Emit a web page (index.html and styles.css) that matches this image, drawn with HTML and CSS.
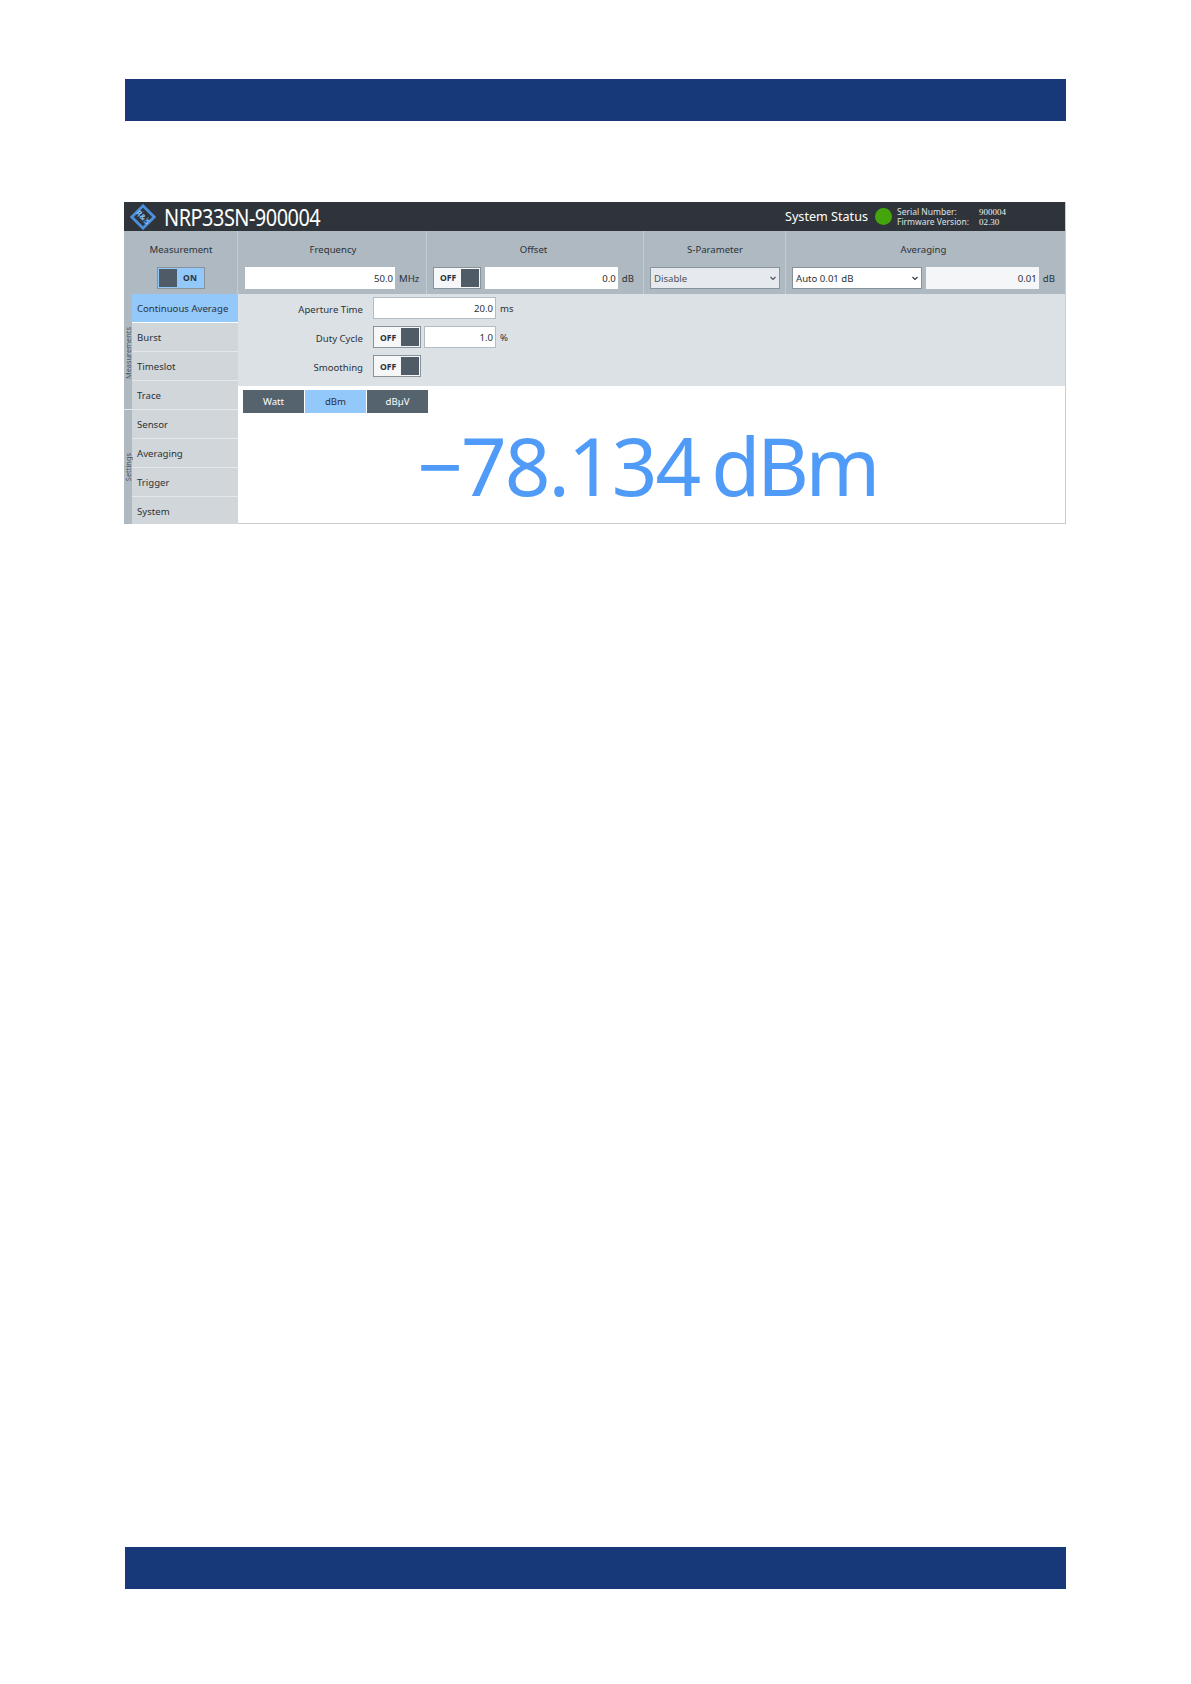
FILE: index.html
```html
<!DOCTYPE html>
<html lang="en">
<head>
  <meta charset="UTF-8" />
  <title>NRP33SN-900004</title>
  <link rel="stylesheet" href="styles.css">
</head>
<body>
  <div class="band band-top"></div>

  <div class="app">
    <!-- Title bar -->
    <header class="title-bar">
      <svg class="logo" viewBox="0 0 28 28" width="26" height="26">
        <rect x="5.5" y="5.5" width="17" height="17" transform="rotate(45 14 14)" fill="none" stroke="#4a90dc" stroke-width="3"/>
        <path d="M8 14L14 8M14 20L20 14" stroke="#4a90dc" stroke-width="1"/>
        <g fill="#8fbdec" font-family="'Noto Sans', sans-serif" font-size="8" font-weight="700" text-anchor="middle">
          <text x="9.5" y="12.5" transform="rotate(45 9.5 10)">R</text>
          <text x="14" y="17" transform="rotate(45 14 14)">&amp;</text>
          <text x="18.5" y="22" transform="rotate(45 18.5 19)">S</text>
        </g>
      </svg>
      <span class="device-name">NRP33SN-900004</span>
      <span class="system-status">System Status</span>
      <span class="status-led"></span>
      <dl class="device-info">
        <dt>Serial Number:</dt><dd>900004</dd>
        <dt>Firmware Version:</dt><dd>02.30</dd>
      </dl>
    </header>

    <!-- Top controls -->
    <section class="controls">
      <div class="control">
        <div class="control-title">Measurement</div>
        <div class="control-row center">
          <div class="toggle toggle-on"><span class="knob"></span><span class="state">ON</span></div>
        </div>
      </div>
      <div class="control">
        <div class="control-title">Frequency</div>
        <div class="control-row">
          <div class="field freq-field">50.0</div>
          <span class="unit">MHz</span>
        </div>
      </div>
      <div class="control">
        <div class="control-title">Offset</div>
        <div class="control-row">
          <div class="toggle"><span class="state">OFF</span><span class="knob"></span></div>
          <div class="field grow">0.0</div>
          <span class="unit">dB</span>
        </div>
      </div>
      <div class="control">
        <div class="control-title">S-Parameter</div>
        <div class="control-row">
          <div class="select select-disabled grow">Disable<svg class="chevron" viewBox="0 0 8 5" width="8" height="5"><path d="M1.5 1l2.5 2.5 2.5-2.5" fill="none" stroke="#47525c" stroke-width="1.1"/></svg></div>
        </div>
      </div>
      <div class="control">
        <div class="control-title">Averaging</div>
        <div class="control-row">
          <div class="select avg-select">Auto 0.01 dB<svg class="chevron" viewBox="0 0 8 5" width="8" height="5"><path d="M1.5 1l2.5 2.5 2.5-2.5" fill="none" stroke="#2b3238" stroke-width="1.1"/></svg></div>
          <div class="field field-soft grow">0.01</div>
          <span class="unit">dB</span>
        </div>
      </div>
    </section>

    <div class="main">
      <!-- Side navigation -->
      <nav class="sidebar">
        <div class="nav-group group-measurements">
          <div class="group-label"><span>Measurements</span></div>
          <div class="nav-items">
            <a class="nav-item active">Continuous Average</a>
            <a class="nav-item">Burst</a>
            <a class="nav-item">Timeslot</a>
            <a class="nav-item">Trace</a>
          </div>
        </div>
        <div class="nav-group group-settings">
          <div class="group-label"><span>Settings</span></div>
          <div class="nav-items">
            <a class="nav-item">Sensor</a>
            <a class="nav-item">Averaging</a>
            <a class="nav-item">Trigger</a>
            <a class="nav-item">System</a>
          </div>
        </div>
      </nav>

      <div class="content">
        <section class="settings">
          <div class="setting-row">
            <label>Aperture Time</label>
            <div class="field boxed aperture-field">20.0</div>
            <span class="unit">ms</span>
          </div>
          <div class="setting-row">
            <label>Duty Cycle</label>
            <div class="toggle"><span class="state">OFF</span><span class="knob"></span></div>
            <div class="field boxed duty-field">1.0</div>
            <span class="unit">%</span>
          </div>
          <div class="setting-row">
            <label>Smoothing</label>
            <div class="toggle"><span class="state">OFF</span><span class="knob"></span></div>
          </div>
        </section>

        <section class="readout">
          <div class="unit-tabs">
            <button class="unit-tab">Watt</button>
            <button class="unit-tab active">dBm</button>
            <button class="unit-tab">dBµV</button>
          </div>
          <div class="value">−78.134<span class="value-unit">dBm</span></div>
        </section>
      </div>
    </div>
  </div>

  <div class="band band-bottom"></div>
</body>
</html>
```

FILE: styles.css
```css
* {
  margin: 0;
  padding: 0;
  box-sizing: border-box;
}

body {
  background: #fff;
  font-family: "Noto Sans", "Open Sans", sans-serif;
  font-size: 9.6px;
  color: #2b3238;
  padding-top: 79px;
  height: 1684px;
  overflow: hidden;
}

.band {
  width: 941px;
  height: 42px;
  margin-left: 125px;
  background: #17397a;
}

.band-bottom {
  margin-top: 1023px;
}

.app {
  width: 942px;
  margin: 81px 0 0 124px;
  border-right: 1px solid #c6ccd1;
  border-bottom: 1px solid #c6ccd1;
}

/* Title bar */
.title-bar {
  height: 29px;
  background: #2e3439;
  color: #fff;
  display: flex;
  align-items: center;
  padding-left: 6px;
}

.logo {
  flex: none;
}

.device-name {
  font-size: 24px;
  margin-left: 8px;
  letter-spacing: -0.6px;
  transform: scaleX(0.83);
  transform-origin: left center;
}

.system-status {
  font-size: 12.6px;
  margin-left: auto;
}

.status-led {
  width: 17px;
  height: 17px;
  border-radius: 50%;
  background: #44a40c;
  margin: 0 5px 0 7px;
}

.device-info {
  display: grid;
  grid-template-columns: 82px 86px;
  font-size: 8.5px;
  line-height: 10px;
  padding-top: 1px;
  color: #dfe3e6;
}

.device-info dd {
  font-family: "Liberation Serif", serif;
  font-size: 9px;
  color: #eceff1;
}

/* Top controls */
.controls {
  display: grid;
  grid-template-columns: 114px 189px 217px 142px 1fr;
  height: 63px;
  background: #aeb9c2;
}

.control {
  border-right: 1px solid #c3ccd3;
  padding: 0 5px 0 6px;
}

.control:nth-child(2) {
  padding-left: 7px;
}

.control:nth-child(3) {
  padding-right: 9px;
}

.control:last-child {
  border-right: none;
  padding-right: 10px;
}

.control-title {
  height: 36px;
  line-height: 37px;
  text-align: center;
}

.control-row {
  display: flex;
  align-items: center;
  gap: 4px;
  height: 22px;
}

.control-row.center {
  justify-content: center;
}

.grow {
  flex: 1;
}

.field {
  height: 22px;
  line-height: 23px;
  background: #fff;
  text-align: right;
  padding-right: 2px;
}

.field.boxed {
  border: 1px solid #b3bcc4;
  line-height: 22px;
}

.field-soft {
  background: #f5f6f7;
}

.freq-field {
  width: 150px;
}

.unit {
  white-space: nowrap;
  padding-top: 1px;
}

.select {
  height: 22px;
  line-height: 21px;
  background: #fff;
  border: 1px solid #87929b;
  padding-left: 3px;
  display: flex;
  justify-content: space-between;
  align-items: center;
}

.select-disabled {
  background: #e6e9ed;
  color: #47525c;
}

.avg-select {
  width: 130px;
}

.chevron {
  margin-right: 2px;
}

/* Toggle */
.toggle {
  display: flex;
  flex: none;
  width: 48px;
  height: 22px;
  padding: 1px;
  border: 1px solid #87929b;
  background: #f5f7f8;
  font-size: 8.6px;
  font-weight: 700;
  line-height: 19px;
}

.setting-row .toggle {
  line-height: 21px;
}

.toggle .state {
  flex: 1;
  text-align: center;
}

.toggle .knob {
  width: 18px;
  background: #4f5c68;
}

.toggle-on {
  background: #93c8fb;
}

/* Main area */
.main {
  display: flex;
  height: 229px;
}

.sidebar {
  width: 114px;
  flex: none;
  display: flex;
  flex-direction: column;
}

.nav-group {
  display: flex;
}

.group-label {
  width: 8px;
  flex: none;
  background: #aeb9c2;
  display: flex;
  justify-content: center;
  font-size: 7.4px;
  color: #47525c;
}

.group-label span {
  writing-mode: vertical-rl;
  transform: rotate(180deg);
  white-space: nowrap;
  line-height: 8px;
}

.group-measurements .group-label {
  align-items: center;
  padding-top: 3px;
  border-bottom: 1px solid #e4e8eb;
}

.group-settings .group-label {
  align-items: flex-end;
  padding-bottom: 43px;
}

.nav-items {
  flex: 1;
}

.nav-item {
  display: block;
  height: 29px;
  line-height: 29px;
  padding-left: 5px;
  background: #d0d6da;
  border-bottom: 1px solid #e4e8eb;
}

.nav-item.active {
  background: #93c8fb;
  border-bottom-color: #fff;
}

.group-settings .nav-item:last-child {
  height: 27px;
  border-bottom: none;
}

.content {
  flex: 1;
  display: flex;
  flex-direction: column;
  min-width: 0;
}

.settings {
  height: 92px;
  background: #dce1e6;
  padding-top: 3px;
  display: flex;
  flex-direction: column;
  gap: 7px;
}

.setting-row {
  display: flex;
  align-items: center;
  height: 22px;
  gap: 3px;
}

.setting-row label {
  width: 125px;
  text-align: right;
  margin-right: 7px;
  padding-top: 2px;
}

.setting-row .unit {
  margin-left: 1px;
}

.aperture-field {
  width: 123px;
}

.duty-field {
  width: 72px;
}

/* Readout */
.readout {
  flex: 1;
  background: #fff;
  padding: 4px 0 0 5px;
}

.unit-tabs {
  display: flex;
  gap: 1px;
}

.unit-tab {
  width: 61px;
  height: 23px;
  border: none;
  background: #55636f;
  color: #fff;
  font-family: inherit;
  font-size: 9.6px;
}

.unit-tab.active {
  background: #93c8fb;
  color: #2b3238;
}

.value {
  font-size: 80px;
  line-height: 80px;
  color: #4f9bf7;
  letter-spacing: -2px;
  text-align: center;
  padding-right: 14px;
  margin-top: 12px;
  white-space: nowrap;
}

.value-unit {
  margin-left: 12px;
  letter-spacing: -3.5px;
}
```
